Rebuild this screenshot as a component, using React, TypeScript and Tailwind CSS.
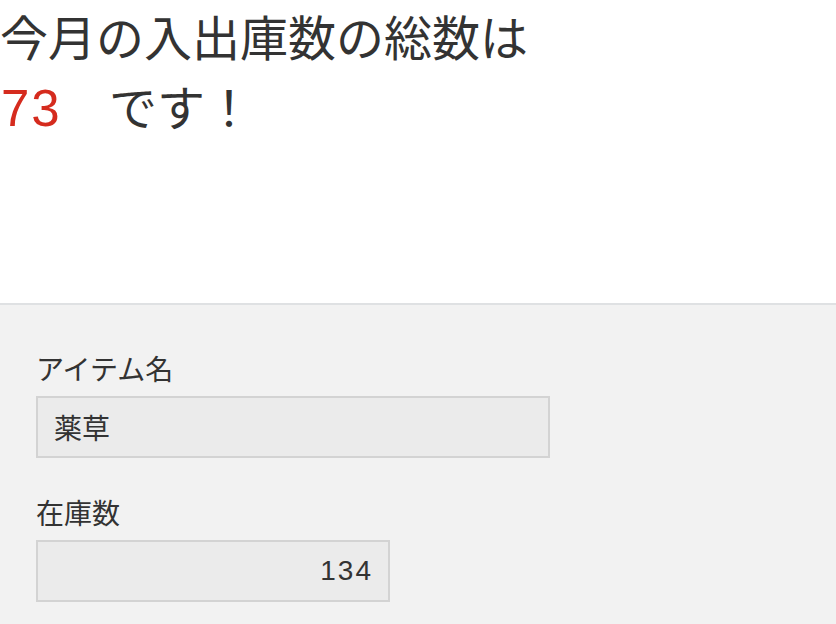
export default function App() {
  const font = { fontFamily: '"Noto Sans CJK JP", "Noto Sans", sans-serif' };
  const num = { fontFamily: '"Liberation Sans", Arial, sans-serif' };
  return (
    <div className="w-[836px] h-[624px] overflow-hidden bg-white text-[#333333]" style={font}>
      <div className="h-[303px]">
        <h1 className="text-[48px] leading-[70px] font-normal m-0">
          <div>今月の入出庫数の総数は</div>
          <div className="flex items-baseline">
            <span className="text-[#d52b1e] text-[51px] tracking-[2px] pl-[1px] w-[61px] whitespace-nowrap" style={num}>73</span>
            <span>　です！</span>
          </div>
        </h1>
      </div>
      <div className="border-t-2 border-[#dfe1e3] bg-[#f2f2f2] h-[321px] pl-[36px] pt-[44px]">
        <div className="text-[28px] leading-[38px]">アイテム名</div>
        <div className="mt-[9px] w-[514px] h-[62px] border-2 border-[#d3d3d3] bg-[#ebebeb] flex items-center px-[16px] text-[28px]">
          薬草
        </div>
        <div className="mt-[35px] text-[28px] leading-[38px]">在庫数</div>
        <div className="mt-[9px] w-[354px] h-[62px] border-2 border-[#d3d3d3] bg-[#ebebeb] flex items-center justify-end pr-[15px] text-[28px]">
          <span className="tracking-[2px]" style={num}>134</span>
        </div>
      </div>
    </div>
  );
}
